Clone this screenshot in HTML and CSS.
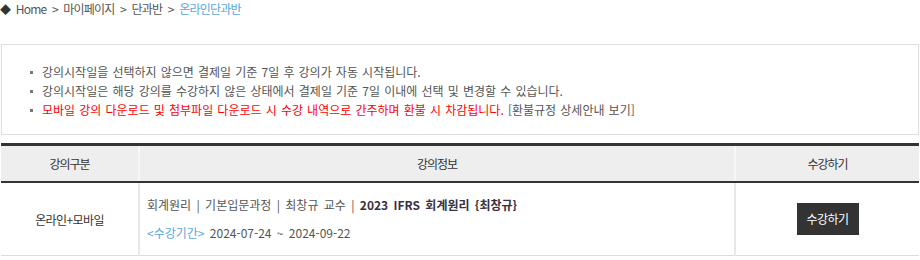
FILE: index.html
```html
<!DOCTYPE html>
<html lang="ko">
<head>
<meta charset="utf-8">
<link rel="stylesheet" href="styles.css">
</head>
<body>
<div class="page">
  <div class="crumb"><span class="dia">◆</span> Home <span class="sep">&gt;</span> 마이페이지 <span class="sep">&gt;</span> 단과반 <span class="sep">&gt;</span> <span class="cur">온라인단과반</span></div>
  <div class="notice">
    <ul>
      <li>강의시작일을 선택하지 않으면 결제일 기준 7일 후 강의가 자동 시작됩니다.</li>
      <li>강의시작일은 해당 강의를 수강하지 않은 상태에서 결제일 기준 7일 이내에 선택 및 변경할 수 있습니다.</li>
      <li><span class="red">모바일 강의 다운로드 및 첨부파일 다운로드 시 수강 내역으로 간주하며 환불 시 차감됩니다.</span> [환불규정 상세안내 보기]</li>
    </ul>
  </div>
  <table class="list">
    <thead>
      <tr>
        <th class="c1">강의구분</th>
        <th class="c2">강의정보</th>
        <th class="c3">수강하기</th>
      </tr>
    </thead>
    <tbody>
      <tr>
        <td class="c1">온라인+모바일</td>
        <td class="c2 info">
          <div class="line">회계원리 | 기본입문과정 | 최창규 교수 | <b>2023 IFRS 회계원리 {최창규}</b></div>
          <div class="line"><span class="blue">&lt;수강기간&gt;</span> 2024-07-24 ~ 2024-09-22</div>
        </td>
        <td class="c3"><span class="btn">수강하기</span></td>
      </tr>
    </tbody>
  </table>
</div>
</body>
</html>
```
FILE: styles.css
```css
html, body {
  margin: 0;
  padding: 0;
  background: #fff;
}
body {
  font-family: "Noto Sans CJK KR", "Noto Sans", sans-serif;
  font-size: 12px;
  color: #555;
}
.page {
  padding-left: 1px;
  width: 918px;
}
.crumb {
  height: 17px;
  line-height: 17px;
  letter-spacing: -0.8px;
  word-spacing: 3px;
  color: #555;
  margin-left: -1px;
}
.crumb .dia {
  color: #333;
  font-size: 11px;
}
.crumb .cur {
  color: #5aa7dd;
}
.notice {
  margin-top: 27px;
  border: 1px solid #ddd;
  padding: 17px 0 15px;
}
.notice ul {
  list-style: none;
  margin: 0;
  padding: 0 0 0 40px;
}
.notice li {
  position: relative;
  line-height: 19px;
  word-spacing: 0.8px;
}
.notice li::before {
  content: "";
  position: absolute;
  left: -12px;
  top: 9px;
  width: 3px;
  height: 3px;
  background: #777;
}
.red {
  color: #f00;
}
.list {
  margin-top: 8px;
  width: 918px;
  border-collapse: collapse;
  border-top: 3px solid #333;
}
.list th {
  height: 35px;
  padding: 0;
  background: #eee;
  font-weight: normal;
  color: #333;
  letter-spacing: -1px;
  border-bottom: 2px solid #333;
}
.list td {
  height: 72px;
  padding: 0;
  border-bottom: 1px solid #ddd;
  color: #333;
  text-align: center;
}
.list td.c1 { letter-spacing: -0.6px; }
.list .c1 { width: 137px; }
.list .c3 { width: 183px; }
.list th.c2, .list th.c3 { border-left: 2px solid #f7f7f7; }
.list td.c2, .list td.c3 { border-left: 2px solid #e8e8e8; }
.list td.info {
  text-align: left;
  padding-left: 7px;
  color: #555;
  word-spacing: 2px;
}
.info .line {
  line-height: 28px;
}
.info b {
  color: #3a3040;
}
.blue {
  color: #5aa7dd;
}
.btn {
  display: inline-block;
  width: 62px;
  height: 32px;
  line-height: 32px;
  background: #333;
  color: #fff;
  text-align: center;
  letter-spacing: -0.5px;
}
```
